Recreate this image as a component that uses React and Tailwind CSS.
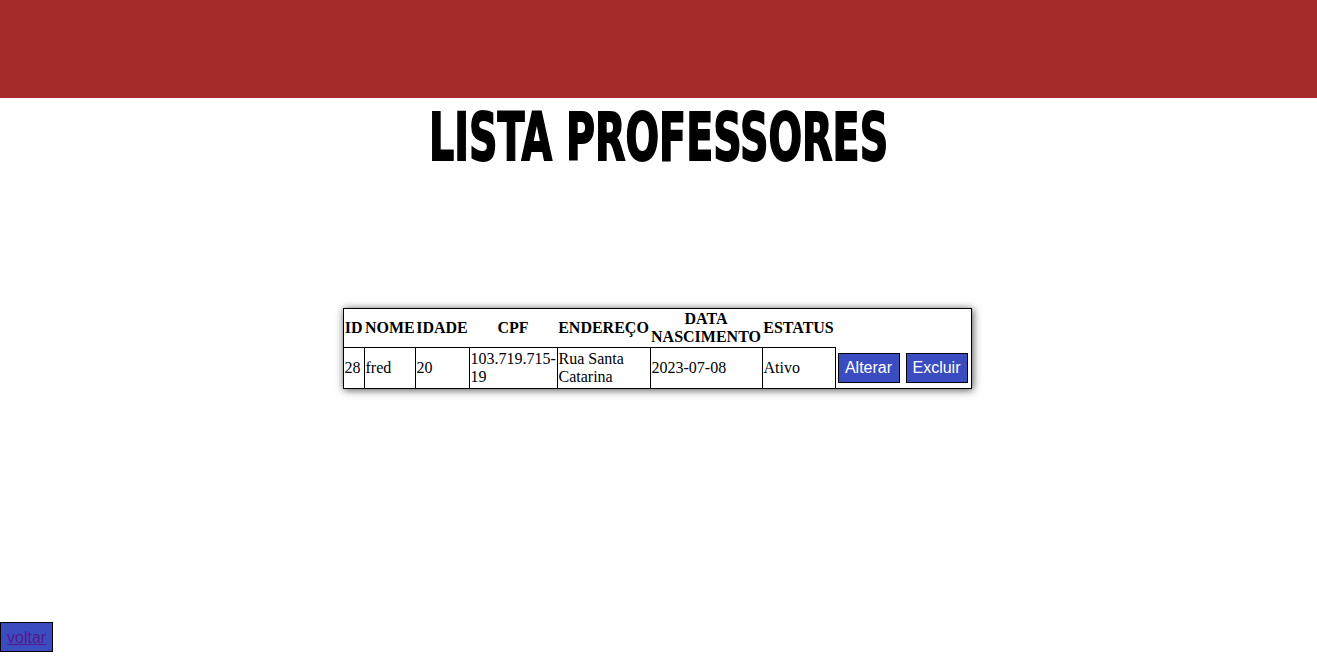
export default function App() {
  const serif = { fontFamily: '"Liberation Serif", "Times New Roman", serif' };
  return (
    <div className="min-h-[663px] bg-white text-black" style={serif}>
      <header className="h-[98px] bg-[#a52a2a]" />

      <div className="mt-[8px] flex justify-center">
        <h1
          className="inline-block scale-x-[0.6] whitespace-nowrap text-[66px] font-bold leading-[64px] [-webkit-text-stroke:2px_black]"
          style={{ fontFamily: '"DejaVu Sans", Impact, sans-serif' }}
        >
          LISTA PROFESSORES
        </h1>
      </div>

      <div className="mt-[138px] flex justify-center">
        <table className="mr-[3px] w-[628px] table-fixed border border-black text-[16px] leading-[18px] shadow-[1px_1px_8px_rgba(0,0,0,0.7)]">
          <colgroup>
            <col className="w-[21px]" />
            <col className="w-[51px]" />
            <col className="w-[54px]" />
            <col className="w-[88px]" />
            <col className="w-[93px]" />
            <col className="w-[112px]" />
            <col className="w-[73px]" />
            <col className="w-[136px]" />
          </colgroup>
          <thead>
            <tr className="h-[39px] font-bold">
              <th className="p-[1px]">ID</th>
              <th className="p-[1px]">NOME</th>
              <th className="p-[1px]">IDADE</th>
              <th className="p-[1px]">CPF</th>
              <th className="p-[1px]">ENDEREÇO</th>
              <th className="p-[1px]">DATA NASCIMENTO</th>
              <th className="p-[1px]">ESTATUS</th>
              <th className="p-[1px]" />
            </tr>
          </thead>
          <tbody>
            <tr className="h-[41px]">
              <td className="border border-black p-[1px]">28</td>
              <td className="border border-black p-[1px]">fred</td>
              <td className="border border-black p-[1px]">20</td>
              <td className="border border-black p-[1px]">103.719.715-19</td>
              <td className="border border-black p-[1px]">Rua Santa Catarina</td>
              <td className="border border-black p-[1px]">2023-07-08</td>
              <td className="border border-black p-[1px]">Ativo</td>
              <td className="py-[1px] pl-[2px]">
                <div className="flex gap-[6px]" style={{ fontFamily: '"Liberation Sans", Arial, sans-serif' }}>
                  <button className="h-[30px] w-[62px] border border-black bg-[#3b4cc0] text-[16px] text-white">
                    Alterar
                  </button>
                  <button className="h-[30px] w-[62px] border border-black bg-[#3b4cc0] text-[16px] text-white">
                    Excluir
                  </button>
                </div>
              </td>
            </tr>
          </tbody>
        </table>
      </div>

      <div className="mt-[233px]">
        <a
          href="#"
          className="inline-block h-[30px] w-[53px] border border-black bg-[#3b4cc0] px-[6px] pt-[3px] text-[16px] text-[#551a8b] underline"
          style={{ fontFamily: '"Liberation Sans", Arial, sans-serif' }}
        >
          voltar
        </a>
      </div>
    </div>
  );
}
